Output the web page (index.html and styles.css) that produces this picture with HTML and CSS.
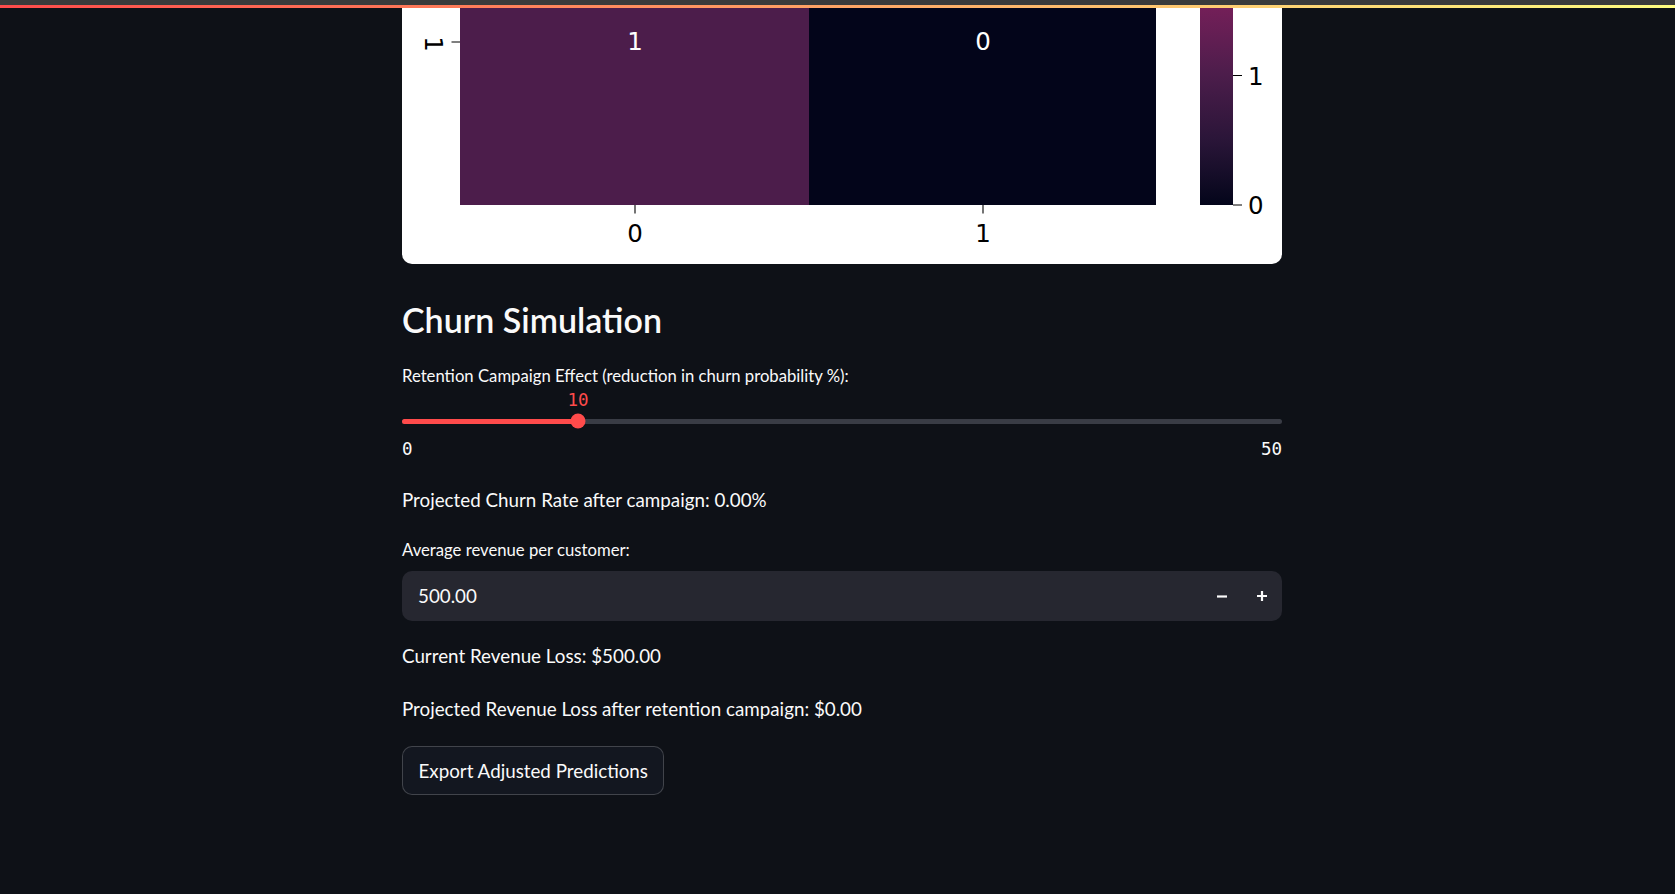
FILE: index.html
```html
<!DOCTYPE html>
<html lang="en">
<head>
<meta charset="utf-8">
<title>Churn Simulation</title>
<link rel="stylesheet" href="styles.css">
</head>
<body>
<header class="topbar">
  <div class="toolbar"></div>
  <div class="decoration"></div>
</header>
<div class="app">
  <main class="block">
    <div class="figure-card">
      <svg class="heatmap" width="880" height="256" viewBox="0 0 880 256">
        <defs>
          <linearGradient id="rocket" x1="0" y1="0" x2="0" y2="1">
            <stop offset="0" stop-color="#731f58"/>
            <stop offset="0.17" stop-color="#601e52"/>
            <stop offset="0.34" stop-color="#4c1d4b"/>
            <stop offset="0.67" stop-color="#2a1538"/>
            <stop offset="0.85" stop-color="#150d28"/>
            <stop offset="1" stop-color="#03051a"/>
          </linearGradient>
        </defs>
        <rect x="58" y="0" width="349" height="197" fill="#4c1d4b"/>
        <rect x="407" y="0" width="347" height="197" fill="#03051a"/>
        <text class="cell" x="233" y="41.9">1</text>
        <text class="cell" x="581" y="41.9">0</text>
        <line class="tick" x1="49.5" y1="34" x2="58" y2="34"/>
        <text class="ylabel" transform="translate(32 36) rotate(90)" x="0" y="8.9">1</text>
        <line class="tick" x1="233" y1="197" x2="233" y2="205.5"/>
        <line class="tick" x1="581" y1="197" x2="581" y2="205.5"/>
        <text class="xlabel" x="233" y="233.9">0</text>
        <text class="xlabel" x="581" y="233.9">1</text>
        <rect x="798" y="0" width="33" height="197" fill="url(#rocket)"/>
        <line class="tick" x1="831" y1="67.5" x2="840" y2="67.5"/>
        <line class="tick" x1="831" y1="197" x2="840" y2="197"/>
        <text class="cblabel" x="846" y="76.7">1</text>
        <text class="cblabel" x="846" y="205.9">0</text>
      </svg>
    </div>

    <h3 class="subheader">Churn Simulation</h3>

    <div class="widget-label label-slider">Retention Campaign Effect (reduction in churn probability %):</div>
    <div class="slider">
      <div class="slider-value" style="--pos:20%"><span>10</span></div>
      <div class="slider-row">
        <div class="track"><div class="track-fill" style="width:20%"></div></div>
        <div class="thumb" style="left:20%"></div>
      </div>
      <div class="slider-ticks"><span>0</span><span>50</span></div>
    </div>

    <p class="text text-churn">Projected Churn Rate after campaign: 0.00%</p>

    <div class="widget-label label-revenue">Average revenue per customer:</div>
    <div class="number-input">
      <span class="number-value">500.00</span>
      <button class="step" aria-label="minus">
        <svg width="12" height="12" viewBox="0 0 12 12"><path d="M1 6.5h10" stroke="#fafafa" stroke-width="2.2"/></svg>
      </button>
      <button class="step" aria-label="plus">
        <svg width="12" height="12" viewBox="0 0 12 12"><path d="M1 6h10M6 1v10" stroke="#fafafa" stroke-width="2.2"/></svg>
      </button>
    </div>

    <p class="text text-current">Current Revenue Loss: $500.00</p>
    <p class="text text-projected">Projected Revenue Loss after retention campaign: $0.00</p>

    <button class="btn">Export Adjusted Predictions</button>
  </main>
</div>
</body>
</html>
```

FILE: styles.css
```css
html, body {
  margin: 0;
  padding: 0;
}

body {
  background: #0e1117;
  color: #fafafa;
  font-family: Lato, "Noto Sans", sans-serif;
  height: 894px;
  overflow: hidden;
}

.topbar {
  display: flex;
  flex-direction: column;
}

.toolbar {
  height: 5px;
  background: #3b3b3b;
}

.decoration {
  height: 3px;
  background: linear-gradient(90deg, #ff4b4b, #fffd80);
}

.app {
  padding-left: 9px;
}

.block {
  width: 880px;
  margin: 0 auto;
  display: flex;
  flex-direction: column;
  align-items: stretch;
}

.figure-card {
  background: #ffffff;
  border-radius: 0 0 10px 10px;
  height: 256px;
  overflow: hidden;
}

.heatmap {
  display: block;
}

.heatmap text {
  font-family: "DejaVu Sans", sans-serif;
  font-size: 24.5px;
}

.heatmap .cell {
  fill: #ffffff;
  text-anchor: middle;
}

.heatmap .xlabel,
.heatmap .ylabel {
  fill: #000000;
  text-anchor: middle;
}

.heatmap .cblabel {
  fill: #000000;
  text-anchor: start;
}

.heatmap .tick {
  stroke: #000000;
  stroke-width: 1.1;
}

.subheader {
  margin: 34.9px 0 0;
  font-size: 34px;
  line-height: 42px;
  font-weight: 600;
  color: #fafafa;
}

.widget-label {
  font-size: 16.7px;
  line-height: 21px;
  color: #fafafa;
}

.label-slider {
  margin-top: 24.8px;
}

.slider {
  display: flex;
  flex-direction: column;
}

.slider-value {
  margin-top: 3.5px;
  font-family: "DejaVu Sans Mono", "Liberation Mono", monospace;
  font-size: 17.5px;
  line-height: 21px;
  color: #ff4b4b;
}

.slider-value span {
  display: inline-block;
  margin-left: var(--pos);
  transform: translateX(-50%);
}

.slider-row {
  margin-top: 2.8px;
  height: 15px;
  position: relative;
  display: flex;
  align-items: center;
}

.track {
  flex: 1;
  height: 5px;
  border-radius: 3px;
  background: #393c45;
  overflow: hidden;
}

.track-fill {
  height: 100%;
  background: #ff4b4b;
}

.thumb {
  position: absolute;
  top: 50%;
  width: 15px;
  height: 15px;
  border-radius: 50%;
  background: #ff4b4b;
  transform: translate(-50%, -50%);
}

.slider-ticks {
  margin-top: 10.2px;
  display: flex;
  justify-content: space-between;
  font-family: "DejaVu Sans Mono", "Liberation Mono", monospace;
  font-size: 17.5px;
  line-height: 21px;
  color: #fafafa;
}

.text {
  margin: 0;
  font-size: 18.8px;
  line-height: 24px;
  color: #fafafa;
}

.text-churn {
  margin-top: 27.6px;
}

.label-revenue {
  margin-top: 28.2px;
}

.number-input {
  margin-top: 10px;
  height: 50px;
  border-radius: 10px;
  background: #262730;
  display: flex;
  align-items: center;
  padding-left: 16px;
}

.number-value {
  flex: 1;
  font-size: 18.8px;
  color: #fafafa;
}

.step {
  width: 40px;
  height: 50px;
  border: none;
  background: transparent;
  padding: 0;
  display: flex;
  align-items: center;
  justify-content: center;
}

.step svg {
  display: block;
}

.text-current {
  margin-top: 23.1px;
}

.text-projected {
  margin-top: 28.7px;
}

.btn {
  align-self: flex-start;
  margin-top: 24.9px;
  height: 49px;
  padding: 0 15.5px;
  border: 1px solid rgba(250, 250, 250, 0.2);
  border-radius: 10px;
  background: #131720;
  color: #fafafa;
  font-family: Lato, "Noto Sans", sans-serif;
  font-size: 18.8px;
}
```
